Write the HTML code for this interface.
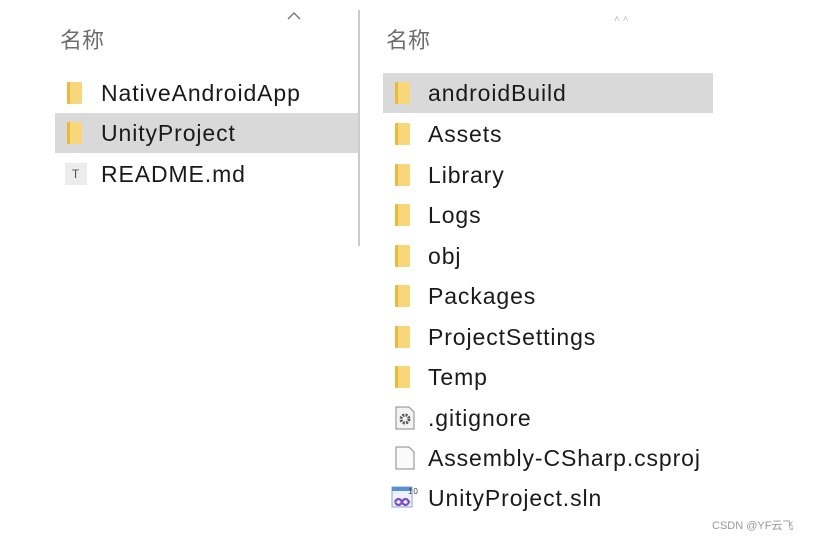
<!DOCTYPE html><html><head><meta charset="utf-8"><style>
body{margin:0;width:822px;height:540px;background:#fff;position:relative;overflow:hidden;font-family:"Liberation Sans","Noto Sans CJK SC",sans-serif;color:#1a1a1a}
.a{position:absolute}
.hd{font-size:22px;color:#6d6d6d}
.r{position:absolute;height:40px;line-height:40px;font-size:23px;letter-spacing:0.9px;white-space:nowrap}
.f{position:absolute;width:15px;height:22px;top:9px;background:linear-gradient(90deg,#e9b93f 0 3px,#f8d77a 3px);border-radius:1px}
.sel{background:#d9d9d9}
</style></head><body>
<div class="a hd" style="left:60px;top:23px">名称</div>
<div class="a hd" style="left:386px;top:23px">名称</div>
<svg class="a" style="left:286px;top:11px" width="16" height="10"><path d="M2 8 L8 2 L14 8" fill="none" stroke="#777" stroke-width="1.4"/></svg>
<div class="a" style="left:614px;top:14px;font-size:10px;color:#bbb">˄ ˄</div>
<div class="a" style="left:358px;top:10px;width:2px;height:236px;background:#ccc"></div>

<div class="r" style="left:55px;top:73px;width:303px"><div class="f" style="left:12px"></div><span class="a" style="left:46px">NativeAndroidApp</span></div>
<div class="r sel" style="left:55px;top:113px;width:303px"><div class="f" style="left:12px"></div><span class="a" style="left:46px">UnityProject</span></div>
<div class="r" style="left:55px;top:154px;width:303px"><div class="a" style="left:10px;top:9px;width:22px;height:22px;background:#ececec;font-size:12px;line-height:22px;text-align:center;color:#555">T</div><span class="a" style="left:46px">README.md</span></div>

<div class="r sel" style="left:383px;top:73px;width:330px"><div class="f" style="left:12px"></div><span class="a" style="left:45px">androidBuild</span></div>
<div class="r" style="left:383px;top:114px"><div class="f" style="left:12px"></div><span class="a" style="left:45px">Assets</span></div>
<div class="r" style="left:383px;top:155px"><div class="f" style="left:12px"></div><span class="a" style="left:45px">Library</span></div>
<div class="r" style="left:383px;top:195px"><div class="f" style="left:12px"></div><span class="a" style="left:45px">Logs</span></div>
<div class="r" style="left:383px;top:236px"><div class="f" style="left:12px"></div><span class="a" style="left:45px">obj</span></div>
<div class="r" style="left:383px;top:276px"><div class="f" style="left:12px"></div><span class="a" style="left:45px">Packages</span></div>
<div class="r" style="left:383px;top:317px"><div class="f" style="left:12px"></div><span class="a" style="left:45px">ProjectSettings</span></div>
<div class="r" style="left:383px;top:357px"><div class="f" style="left:12px"></div><span class="a" style="left:45px">Temp</span></div>
<div class="r" style="left:383px;top:398px"><svg class="a" style="left:12px;top:8px" width="20" height="24"><path d="M1 1H14L19 6V23H1Z" fill="#f4f4f4" stroke="#888"/><circle cx="10" cy="13" r="4" fill="none" stroke="#555" stroke-width="3" stroke-dasharray="2 1.2"/></svg><span class="a" style="left:45px">.gitignore</span></div>
<div class="r" style="left:383px;top:438px"><svg class="a" style="left:12px;top:8px" width="20" height="24"><path d="M1 1H14L19 6V23H1Z" fill="#fafafa" stroke="#888"/></svg><span class="a" style="left:45px">Assembly-CSharp.csproj</span></div>
<div class="r" style="left:383px;top:478px"><svg class="a" style="left:8px;top:6px" width="28" height="26"><rect x="1" y="3" width="20" height="20" fill="#eef3fb" stroke="#8aa3c8"/><rect x="1" y="3" width="20" height="4" fill="#5a8fd6"/><text x="17" y="10" font-size="8" fill="#444" font-family="Liberation Sans">10</text><path d="M4 18c2-4 5-4 7 0s5 4 7 0c-2-4-5-4-7 0s-5 4-7 0" fill="none" stroke="#7a4cc9" stroke-width="2.2"/></svg><span class="a" style="left:45px">UnityProject.sln</span></div>

<div class="a" style="left:712px;top:517px;font-size:11px;color:#999">CSDN @YF云飞</div>
</body></html>
